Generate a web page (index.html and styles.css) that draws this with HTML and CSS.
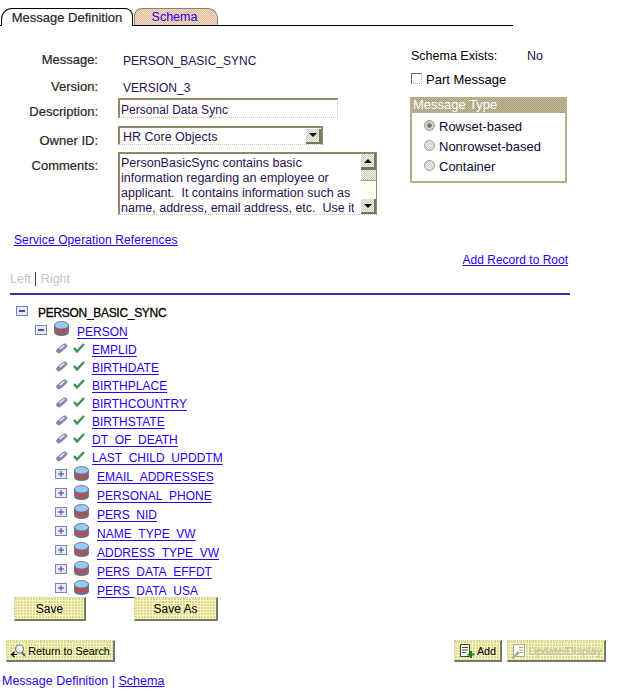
FILE: index.html
```html
<!DOCTYPE html>
<html lang="en">
    <head>
        <meta charset="UTF-8">
        <title>Message Definition</title>
        <link rel="stylesheet" href="styles.css">
    </head>
    <body>
      <svg class="defs" width="0" height="0">
        <symbol id="db" viewBox="0 0 15 15">
          <path d="M.5 4v7.500c0 1.800 3 3 7 3s7-1.200 7-3V4z" fill="#66738c" stroke="#555e70" stroke-width=".7"/>
          <path d="M1 7.500c1 1.500 3.500 2.300 6.500 2.300S13 9 14 7.500V10c-1 1.500-3.500 2.300-6.500 2.300S2 11.500 1 10z" fill="#d8403a"/>
          <ellipse cx="7.500" cy="4.300" rx="7" ry="3.800" fill="#9ac8ee" stroke="#5f6a80" stroke-width=".8"/>
        </symbol>
        <symbol id="key" viewBox="0 0 12 12">
          <path d="M1 7.500L7 2.500c1-.8 2.500-.8 3.300 0s.8 2 0 2.800L4.500 10.300c-1 .8-2.300.8-3.200 0S.4 8.300 1 7.500z" fill="#7f8bb4" stroke="#6a6f80" stroke-width=".7"/>
          <path d="M3 6.500L7.500 3l1.800.6L4.500 7.500z" fill="#e6eaf4"/>
        </symbol>
        <symbol id="check" viewBox="0 0 12 12">
          <path d="M1 6l3 3.500L11 2" fill="none" stroke="#3a9055" stroke-width="2.400"/>
        </symbol>
        <symbol id="minus" viewBox="0 0 12 10">
          <rect x=".5" y=".5" width="11" height="9" fill="#e6e9f8" stroke="#7d84bc"/>
          <rect x="3" y="4" width="6" height="2" fill="#4a5388"/>
        </symbol>
        <symbol id="plus" viewBox="0 0 12 10">
          <rect x=".5" y=".5" width="11" height="9" fill="#e6e9f8" stroke="#7d84bc"/>
          <rect x="3" y="4.500" width="6" height="1" fill="#3a4378"/>
          <rect x="5.500" y="2" width="1" height="6" fill="#3a4378"/>
        </symbol>
      </svg>

      <div class="tabs">
        <span class="tab tab-active">Message Definition</span>
        <a class="tab tab-other" href="#">Schema</a>
      </div>

      <div class="top">
        <div class="fields">
          <div class="field field-message">
            <span class="label">Message:</span>
            <span class="value">PERSON_BASIC_SYNC</span>
          </div>
          <div class="field field-version">
            <span class="label">Version:</span>
            <span class="value">VERSION_3</span>
          </div>
          <div class="field field-desc">
            <span class="label">Description:</span>
            <input class="input" type="text" value="Personal Data Sync">
          </div>
          <div class="field field-owner">
            <span class="label">Owner ID:</span>
            <div class="select">
              <span class="select-text">HR Core Objects</span>
              <span class="arrow-btn"><i class="arrow-down"></i></span>
            </div>
          </div>
          <div class="field field-comments">
            <span class="label">Comments:</span>
            <div class="comments">
              <div class="comments-text">PersonBasicSync contains basic<br>information regarding an employee or<br>applicant.&nbsp; It contains information such as<br>name, address, email address, etc.&nbsp; Use it</div>
              <div class="scrollbar">
                <span class="arrow-btn"><i class="arrow-up"></i></span>
                <span class="thumb"></span>
                <span class="track"></span>
                <span class="arrow-btn"><i class="arrow-down"></i></span>
              </div>
            </div>
          </div>
        </div>

        <div class="side">
          <div class="schema-row">
            <span class="schema-label">Schema Exists:</span>
            <span class="schema-value">No</span>
          </div>
          <div class="part-row">
            <span class="checkbox"></span>
            <span>Part Message</span>
          </div>
          <div class="group">
            <div class="group-title">Message Type</div>
            <div class="radio-row"><span class="radio radio-on"></span>Rowset-based</div>
            <div class="radio-row"><span class="radio"></span>Nonrowset-based</div>
            <div class="radio-row"><span class="radio"></span>Container</div>
          </div>
        </div>
      </div>

      <a class="service-link" href="#">Service Operation References</a>
      <div class="add-record"><a href="#">Add Record to Root</a></div>
      <div class="left-right"><span>Left</span><span class="sep"></span><span>Right</span></div>
      <div class="rule"></div>

      <div class="tree">
        <div class="row row-root">
          <svg class="box"><use href="#minus"/></svg>
          <b class="root-name">PERSON_BASIC_SYNC</b>
        </div>
        <div class="row row-person">
          <svg class="box"><use href="#minus"/></svg>
          <svg class="db"><use href="#db"/></svg>
          <a href="#">PERSON</a>
        </div>
        <div class="row row-field"><svg class="key"><use href="#key"/></svg><svg class="check"><use href="#check"/></svg><a href="#">EMPLID</a></div>
        <div class="row row-field"><svg class="key"><use href="#key"/></svg><svg class="check"><use href="#check"/></svg><a href="#">BIRTHDATE</a></div>
        <div class="row row-field"><svg class="key"><use href="#key"/></svg><svg class="check"><use href="#check"/></svg><a href="#">BIRTHPLACE</a></div>
        <div class="row row-field"><svg class="key"><use href="#key"/></svg><svg class="check"><use href="#check"/></svg><a href="#">BIRTHCOUNTRY</a></div>
        <div class="row row-field"><svg class="key"><use href="#key"/></svg><svg class="check"><use href="#check"/></svg><a href="#">BIRTHSTATE</a></div>
        <div class="row row-field"><svg class="key"><use href="#key"/></svg><svg class="check"><use href="#check"/></svg><a href="#">DT_OF_DEATH</a></div>
        <div class="row row-field"><svg class="key"><use href="#key"/></svg><svg class="check"><use href="#check"/></svg><a href="#">LAST_CHILD_UPDDTM</a></div>
        <div class="row row-child"><svg class="box"><use href="#plus"/></svg><svg class="db"><use href="#db"/></svg><a href="#">EMAIL_ADDRESSES</a></div>
        <div class="row row-child"><svg class="box"><use href="#plus"/></svg><svg class="db"><use href="#db"/></svg><a href="#">PERSONAL_PHONE</a></div>
        <div class="row row-child"><svg class="box"><use href="#plus"/></svg><svg class="db"><use href="#db"/></svg><a href="#">PERS_NID</a></div>
        <div class="row row-child"><svg class="box"><use href="#plus"/></svg><svg class="db"><use href="#db"/></svg><a href="#">NAME_TYPE_VW</a></div>
        <div class="row row-child"><svg class="box"><use href="#plus"/></svg><svg class="db"><use href="#db"/></svg><a href="#">ADDRESS_TYPE_VW</a></div>
        <div class="row row-child"><svg class="box"><use href="#plus"/></svg><svg class="db"><use href="#db"/></svg><a href="#">PERS_DATA_EFFDT</a></div>
        <div class="row row-child"><svg class="box"><use href="#plus"/></svg><svg class="db"><use href="#db"/></svg><a href="#">PERS_DATA_USA</a></div>
      </div>

      <div class="save-row">
        <button type="button" class="btn btn-save">Save</button>
        <button type="button" class="btn btn-saveas">Save As</button>
      </div>

      <div class="toolbar">
        <button type="button" class="btn btn-return">
          <svg class="btn-icon" viewBox="0 0 16 16" width="16" height="16">
            <circle cx="9.500" cy="6" r="4" fill="#f4f6f8" stroke="#7d8490" stroke-width="1.200"/>
            <path d="M12 9.500l3 3.500" stroke="#666" stroke-width="2"/>
            <path d="M7 11.500H2M4.500 9L1.500 11.500 4.500 14" fill="none" stroke="#000" stroke-width="1.200"/>
          </svg>
          Return to Search
        </button>
        <div class="toolbar-right">
          <button type="button" class="btn btn-add">
            <svg class="btn-icon" viewBox="0 0 16 16" width="16" height="16">
              <path d="M1.500 1.500h9v12h-9zM3 4.500h6M3 7h6M3 9.500h4" fill="#fffff0" stroke="#444"/>
              <path d="M12 8v7M8.500 11.500h7" stroke="#0a8a1c" stroke-width="2.200"/>
            </svg>
            Add
          </button>
          <button type="button" class="btn btn-update">
            <svg class="btn-icon" viewBox="0 0 16 16" width="16" height="16">
              <path d="M3.500 1.500h11v12h-11zM9 4.500h4M9 7h4M9 9.500h4" fill="#fffff0" stroke="#a8a8a0"/>
              <path d="M1 15l7-7 2 2-7 6z" fill="#b0b0a8"/>
            </svg>
            Update/Display
          </button>
        </div>
      </div>

      <div class="footer">
        <span>Message Definition</span> | <a href="#">Schema</a>
      </div>
    </body>
</html>
```

FILE: styles.css
```css
* { box-sizing: border-box; }

body {
    margin: 0;
    padding: 0;
    background: #fff;
    color: #000;
    font-family: "Liberation Sans", Arial, sans-serif;
    font-size: 12px;
    line-height: 16px;
}

a { color: #2a00f0; }

.defs { position: absolute; }

/* tabs */
.tabs {
    display: flex;
    width: 513px;
    height: 26px;
    padding: 8px 0 0 1px;
    border-bottom: 1px solid #000;
}

.tab {
    display: block;
    height: 18px;
    font-size: 13px;
    line-height: 17px;
    text-align: center;
}

.tab-active {
    width: 132px;
    margin-right: 1px;
    background: #fff;
    color: #222;
    -webkit-text-stroke: .2px #333;
    border: 1px solid #000;
    border-bottom: 0;
    border-radius: 11px 8px 0 0;
}

.tab-other {
    width: 84px;
    height: 17px;
    padding-right: 3px;
    font-size: 12.5px;
    color: #2a00f0;
    text-decoration: none;
    border: 1px solid #8b8070;
    border-bottom: 0;
    border-radius: 8px 10px 0 0;
    background: repeating-conic-gradient(#e3b99a 0 25%, #f3e0c6 0 50%) 0 0 / 2px 2px;
}

/* top form */
.top {
    display: flex;
    padding-top: 22px;
}

.fields {
    width: 410px;
    padding-top: 2px;
}

.field {
    display: grid;
    grid-template-columns: 98px auto;
    column-gap: 20px;
    align-items: start;
}

.field-message { height: 27px; }
.field-version { height: 21px; }
.field-desc { height: 28px; }
.field-owner { height: 26px; }
.field-comments { height: 63px; }

.label {
    text-align: right;
    font-size: 13px;
    color: #222;
    -webkit-text-stroke: .2px #333;
}

.field-message .label, .field-version .label { padding-top: 2px; }
.field-desc .label { padding-top: 6px; }
.field-owner .label { padding-top: 7px; }
.field-comments .label { padding-top: 6px; }

.value {
    padding: 3px 0 0 5px;
    color: #2c1050;
}

.input {
    display: block;
    width: 220px;
    height: 20px;
    padding: 2px 0 0 1px;
    font: 12px "Liberation Sans", Arial, sans-serif;
    letter-spacing: .05px;
    color: #2c1050;
    background: #fff;
    border-width: 2px 1px 1px 2px;
    border-style: solid dotted dotted solid;
    border-color: #8e8a68 #c8c4a8 #c8c4a8 #8e8a68;
    border-radius: 0;
    outline: 0;
}

.select {
    display: flex;
    width: 205px;
    height: 19px;
    align-items: center;
    justify-content: space-between;
    border-width: 2px 2px 1px 2px;
    border-style: solid solid dotted solid;
    border-color: #8e8a68 #8e8a68 #c8c4a8 #8e8a68;
}

.select-text {
    padding: 2px 0 0 3px;
    font-size: 12.5px;
    color: #2c1050;
}

.arrow-btn {
    display: flex;
    flex: none;
    width: 15px;
    height: 15px;
    align-items: center;
    justify-content: center;
    border-right: 2px solid #77775f;
    border-bottom: 2px solid #77775f;
    background: repeating-conic-gradient(#c8c8c0 0 25%, #f4f4ec 0 50%) 0 0 / 2px 2px;
}

.arrow-down, .arrow-up {
    width: 0;
    height: 0;
    border-left: 4px solid transparent;
    border-right: 4px solid transparent;
}

.arrow-down { border-top: 4px solid #000; }
.arrow-up { border-bottom: 4px solid #000; }

.comments {
    display: flex;
    width: 259px;
    height: 63px;
    justify-content: space-between;
    border-width: 2px 2px 1px 2px;
    border-style: solid solid dotted solid;
    border-color: #8e8a68 #8e8a68 #c8c4a8 #8e8a68;
}

.comments-text {
    padding: 2px 0 0 1px;
    font-size: 12.5px;
    line-height: 15px;
    color: #2c1050;
    white-space: nowrap;
    overflow: hidden;
}

.scrollbar {
    display: flex;
    flex: none;
    flex-direction: column;
    width: 15px;
    margin-right: -1px;
}

.thumb {
    height: 12px;
    border-top: 1px solid #77775f;
    border-bottom: 1px solid #99997f;
    background: repeating-conic-gradient(#c8c8c0 0 25%, #f4f4ec 0 50%) 0 0 / 2px 2px;
}

.track {
    flex: 1;
    background: repeating-conic-gradient(#ffffe8 0 25%, #fff 0 50%) 0 0 / 2px 2px;
}

/* right column */
.side { width: 157px; }

.schema-row {
    display: flex;
    height: 16px;
    padding-left: 1px;
    font-size: 12.5px;
}

.schema-label { width: 116px; }
.schema-value { color: #2c1050; }

.part-row {
    display: flex;
    align-items: center;
    height: 16px;
    margin-top: 8px;
    padding-left: 1px;
    font-size: 13px;
}

.checkbox {
    flex: none;
    width: 11px;
    height: 11px;
    margin: -3px 4px 0 0;
    border-width: 1px;
    border-style: solid dotted dotted solid;
    border-color: #666 #aaa #aaa #666;
}

.group {
    height: 86px;
    margin-top: 9px;
    border: 2px solid #b8ae88;
    background: #fff;
}

.group-title {
    height: 14px;
    margin: 0 0 4px;
    padding-left: 1px;
    font-size: 13px;
    line-height: 12px;
    color: #fff;
    background: repeating-conic-gradient(#a89c78 0 25%, #c4bc9c 0 50%) 0 0 / 2px 2px;
}

.radio-row {
    display: flex;
    align-items: center;
    height: 20px;
    padding-left: 12px;
    font-size: 13px;
    color: #0a0a30;
}

.radio {
    flex: none;
    width: 11px;
    height: 11px;
    margin: -4px 4px 0 0;
    border-radius: 50%;
    border: 1px solid #9a9a90;
    background: repeating-conic-gradient(#cfcfc8 0 25%, #eee 0 50%) 0 0 / 2px 2px;
}

.radio-on { background: radial-gradient(circle, #777 0 2px, #d4d4cc 2.500px); }

/* links above the tree */
.service-link {
    display: block;
    width: max-content;
    margin: 17px 0 0 14px;
    letter-spacing: .1px;
}

.add-record {
    margin-top: 4px;
    padding-right: 58px;
    text-align: right;
}

.left-right {
    display: flex;
    align-items: center;
    height: 16px;
    margin: 3px 0 0 10px;
    font-size: 12.5px;
    color: #c4c4c4;
}

.sep {
    width: 1px;
    height: 14px;
    margin: 0 5px 0 4px;
    background: #443060;
}

.rule {
    width: 560px;
    height: 2px;
    margin: 6px 0 0 10px;
    background: #333399;
}

/* tree */
.tree { margin-top: 8px; }

.row {
    display: flex;
    align-items: center;
    height: 18px;
}

.row a {
    margin-top: 2px;
    text-underline-offset: 2px;
    text-decoration-skip-ink: none;
}

.box { width: 12px; height: 10px; flex: none; margin-top: -3px; }
.db { width: 15px; height: 15px; flex: none; margin-top: -5px; }
.key { width: 12px; height: 12px; flex: none; margin-top: -3px; }
.check { width: 12px; height: 12px; flex: none; margin-top: -3px; }

.row-root { height: 19px; padding-left: 16px; }

.root-name {
    margin-left: 10px;
    font-weight: 400;
    letter-spacing: -.3px;
    -webkit-text-stroke: .3px #000;
}

.row-person { padding-left: 35px; }
.row-person .db { margin-left: 7px; margin-right: 8px; }

.row-field { padding-left: 56px; }
.row-field .check { margin-left: 5px; margin-right: 7px; }

.row-child { height: 19px; padding-left: 55px; }
.row-child .db { margin-left: 7px; margin-right: 8px; }

/* buttons */
.btn {
    display: flex;
    align-items: center;
    justify-content: center;
    height: 24px;
    padding: 0;
    font: 12px "Liberation Sans", Arial, sans-serif;
    color: #000;
    background:
        radial-gradient(circle at 1px 1px, #d6d4a8 .7px, transparent .9px) 0 0 / 3px 3px,
        #fdfbb0;
    border-width: 1px 2px 2px 1px;
    border-style: dotted solid solid dotted;
    border-color: #c8c8a0 #77776a #77776a #c8c8a0;
}

.save-row {
    display: flex;
    gap: 48px;
    margin-top: -2px;
    padding-left: 14px;
}

.btn-save { width: 72px; }
.btn-saveas { width: 84px; }

.toolbar {
    display: flex;
    justify-content: space-between;
    margin-top: 19px;
    padding: 0 20px 0 6px;
}

.toolbar .btn { height: 22px; font-size: 10.8px; }
.btn-icon { flex: none; margin-right: 2px; }

.btn-return { width: 109px; }

.toolbar-right { display: flex; gap: 5px; }

.btn-add { width: 48px; }
.toolbar .btn-update { width: 99px; color: #b8b8ac; }

.footer {
    margin-top: 11px;
    padding-left: 2px;
    font-size: 12.5px;
    color: #2a00f0;
}
```
